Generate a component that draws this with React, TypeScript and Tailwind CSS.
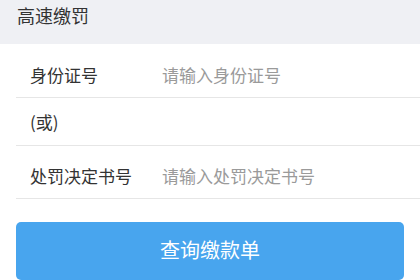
const FONT = "font-['Noto_Sans_CJK_SC','Noto_Sans',sans-serif]";

function Field({ label, placeholder, className }: { label: string; placeholder: string; className: string }) {
  return (
    <div className={`flex items-center ${className}`}>
      <span className="w-[146px] shrink-0 pl-[14px] text-[17px] text-[#333333]">{label}</span>
      <input
        type="text"
        placeholder={placeholder}
        className="min-w-0 flex-1 bg-transparent text-[17px] text-[#333333] outline-none placeholder:text-[#9a9a9a]"
      />
    </div>
  );
}

export default function App() {
  return (
    <div className={`h-[280px] w-[420px] overflow-hidden bg-white ${FONT}`}>
      <header className="flex h-[44px] items-start bg-[#eff0f4] pl-[17px] pt-[3px]">
        <h1 className="text-[18px] leading-[24px] text-[#333333]">高速缴罚</h1>
      </header>

      <div className="pl-[16px]">
        <Field label="身份证号" placeholder="请输入身份证号" className="h-[54px] pt-[9px] border-b border-[#e6e6e6]" />
        <div className="flex h-[48px] items-center border-b border-[#e6e6e6] pl-[14px] text-[17px] text-[#333333]">
          (或)
        </div>
        <Field label="处罚决定书号" placeholder="请输入处罚决定书号" className="h-[53px] pt-[8px] border-b border-[#e6e6e6]" />
      </div>

      <div className="px-[16px] pt-[23px]">
        <button
          type="button"
          className="flex h-[58px] w-[388px] items-start justify-center rounded-[5px] bg-[#48a5ee] pt-[14px] text-[20px] leading-[28px] text-white"
        >
          查询缴款单
        </button>
      </div>
    </div>
  );
}
